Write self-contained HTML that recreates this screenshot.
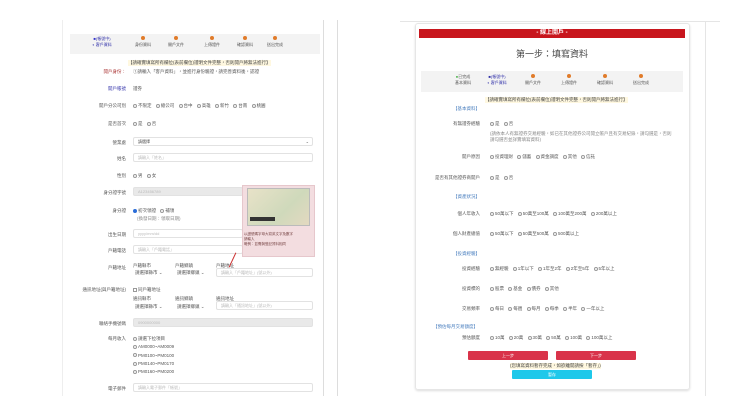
<!DOCTYPE html><html><head><meta charset="utf-8"><style>
*{margin:0;padding:0;box-sizing:border-box}
body{width:740px;height:416px;background:#fff;position:relative;overflow:hidden;font-family:"Liberation Sans","Noto Sans CJK TC",sans-serif;font-size:4.5px;color:#555}
.a{position:absolute;white-space:nowrap}
.in{position:absolute;border:1px solid #e2e2e2;background:#fff;height:9px;border-radius:2px;color:#bbb;padding-left:4px;line-height:7px;font-size:4px}
.g{background:#e9e9e9}
.r{display:inline-block;width:4px;height:4px;border:1px solid #999;border-radius:50%;margin:0 1px 0 3px;vertical-align:middle}
.lab{position:absolute;text-align:right;width:60px;white-space:nowrap}
.dot{display:inline-block;width:4px;height:4px;border-radius:50%;background:#e07b2a}
.step{position:absolute;text-align:center;width:30px;line-height:6px;font-size:4px}
.btn{position:absolute;height:9px;color:#fff;text-align:center;line-height:9px;font-size:4px;border-radius:1px}
</style></head><body>
<!-- left -->
<div class="a" style="left:62px;top:20px;width:262px;height:376px;border-left:1px solid #eee;border-right:1px solid #ddd"></div>
<div class="a" style="left:337px;top:20px;width:1px;height:376px;background:#ddd"></div>
<div class="a" style="left:70px;top:34px;width:250px;height:20px;background:#f3f3f3"></div>
<div class="step" style="left:87px;top:36px;color:#33a"><span style="color:#33c">■</span>(帳號中)<br>◐ 客戶資料</div>
<div class="step" style="left:128px;top:36px"><span class="dot"></span><br>身份資料</div>
<div class="step" style="left:161px;top:36px"><span class="dot"></span><br>開戶文件</div>
<div class="step" style="left:197px;top:36px"><span class="dot"></span><br>上傳證件</div>
<div class="step" style="left:230px;top:36px"><span class="dot"></span><br>確認資料</div>
<div class="step" style="left:260px;top:36px"><span class="dot"></span><br>送出完成</div>
<div class="a" style="left:128px;top:60px;color:#444;background:#fff8e0">【請確實填寫所有欄位(表前欄位)證明文件完整，否則開戶將無法進行】</div>
<div class="lab" style="left:66px;top:69px;color:#a33">開戶身份：</div><div class="a" style="left:133px;top:69px">①請輸入「客戶資料」，並進行身份驗證，請完善資料後，認證</div>
<div class="lab" style="left:66px;top:86px;color:#33a">開戶帳號</div><div class="a" style="left:133px;top:86px">證券</div>
<div class="lab" style="left:66px;top:103px">開戶分公司別</div><div class="a" style="left:130px;top:103px"><span class="r"></span>不限定 <span class="r"></span>總公司 <span class="r"></span>台中 <span class="r"></span>高雄 <span class="r"></span>新竹 <span class="r"></span>台南 <span class="r"></span>桃園</div>
<div class="lab" style="left:66px;top:121px">是否首次</div><div class="a" style="left:130px;top:121px"><span class="r"></span>是 <span class="r"></span>否</div>
<div class="lab" style="left:66px;top:140px">營業處</div><div class="in" style="left:133px;top:137px;width:180px;color:#555">請選擇<span style="float:right;padding-right:3px">⌄</span></div>
<div class="lab" style="left:66px;top:156px">姓名</div><div class="in" style="left:133px;top:153px;width:180px">請輸入「姓名」</div>
<div class="lab" style="left:66px;top:173px">性別</div><div class="a" style="left:130px;top:173px"><span class="r"></span>男 <span class="r"></span>女</div>
<div class="lab" style="left:66px;top:190px">身分證字號</div><div class="in g" style="left:133px;top:187px;width:110px">A123456789</div>
<div class="lab" style="left:66px;top:208px">身分證</div><div class="a" style="left:130px;top:208px"><span class="r" style="background:#2a6dd8;border-color:#2a6dd8"></span>初次領證 <span class="r"></span>補領</div>
<div class="a" style="left:137px;top:216px;color:#888">(換發日期：領取日期)</div>
<div class="lab" style="left:66px;top:232px">出生日期</div><div class="in" style="left:133px;top:229px;width:110px">yyyy/mm/dd</div>
<div class="lab" style="left:66px;top:248px">戶籍電話</div><div class="in" style="left:133px;top:245px;width:110px">請輸入「戶籍電話」</div>
<div class="lab" style="left:66px;top:265px">戶籍地址</div>
<div class="a" style="left:133px;top:263px">戶籍縣市</div><div class="a" style="left:175px;top:263px">戶籍鄉鎮</div><div class="a" style="left:216px;top:263px">戶籍地址</div>
<div class="a" style="left:135px;top:270px;width:40px;color:#555">請選擇縣市 ⌄</div><div class="a" style="left:177px;top:270px">請選擇鄉鎮 ⌄</div>
<div class="in" style="left:216px;top:268px;width:97px">請輸入「戶籍地址」(號以外)</div>
<div class="lab" style="left:66px;top:287px">通訊地址(與戶籍地址)</div><div class="a" style="left:130px;top:287px"><span class="r" style="border-radius:0"></span>同戶籍地址</div>
<div class="a" style="left:133px;top:296px">通訊縣市</div><div class="a" style="left:175px;top:296px">通訊鄉鎮</div><div class="a" style="left:216px;top:296px">通訊地址</div>
<div class="a" style="left:135px;top:304px">請選擇縣市 ⌄</div><div class="a" style="left:177px;top:304px">請選擇鄉鎮 ⌄</div>
<div class="in" style="left:216px;top:301px;width:97px">請輸入「通訊地址」(號以外)</div>
<div class="lab" style="left:66px;top:321px">聯絡手機號碼</div><div class="in g" style="left:133px;top:318px;width:180px">0900000000</div>
<div class="lab" style="left:66px;top:336px">每月收入</div>
<div class="a" style="left:130px;top:335px;line-height:8.3px"><span class="r"></span>請選下拉項目<br><span class="r"></span>AM0000~AM0009<br><span class="r"></span>PM0100~PM0100<br><span class="r"></span>PM0140~PM0170<br><span class="r"></span>PM0160~PM0200</div>
<div class="lab" style="left:66px;top:386px">電子郵件</div><div class="in" style="left:133px;top:383px;width:180px">請輸入電子郵件「帳號」</div>
<div class="a" style="left:242px;top:185px;width:73px;height:72px;background:#f3dde0;border:1px solid #e6c7cc"></div>
<div class="a" style="left:247px;top:188px;width:63px;height:38px;background:linear-gradient(135deg,#e8e2c8,#cfd9bb 60%,#e3d9c0);border:1px solid #bbb"></div>
<div class="a" style="left:250px;top:217px;width:25px;height:4px;background:#333"></div>
<div class="a" style="left:244px;top:232px;font-size:3.5px;line-height:5px;color:#744">以證號碼字母大寫英文字及數字<br>請輸入<br>範例：並需與登記資料相同</div>
<div class="a" style="left:232px;top:252px;width:1px;height:16px;background:#c33;transform:rotate(25deg)"></div>
<!-- right -->
<div class="a" style="left:400px;top:21px;width:320px;height:1px;background:#e5e5e5"></div>
<div class="a" style="left:705px;top:21px;width:1px;height:375px;background:#e5e5e5"></div>
<div class="a" style="left:415px;top:23px;width:275px;height:367px;border:1px solid #e6e6e6;border-radius:3px;box-shadow:0 1px 2px #ddd"></div>
<div class="a" style="left:419px;top:29px;width:266px;height:9px;background:#c8161d;color:#fff;text-align:center;font-size:6px;line-height:9px;font-weight:bold">- 線上開戶 -</div>
<div class="a" style="left:419px;top:47px;width:266px;text-align:center;font-size:9px;color:#444">第一步：填寫資料</div>
<div class="a" style="left:421px;top:71px;width:262px;height:21px;background:#f3f3f3"></div>
<div class="step" style="left:448px;top:74px"><span style="color:#3a3">●</span>已完成<br>基本資料</div>
<div class="step" style="left:482px;top:74px;color:#33a">■(帳號中)<br>◐ 客戶資料</div>
<div class="step" style="left:518px;top:74px"><span class="dot"></span><br>開戶文件</div>
<div class="step" style="left:554px;top:74px"><span class="dot"></span><br>上傳證件</div>
<div class="step" style="left:590px;top:74px"><span class="dot"></span><br>確認資料</div>
<div class="step" style="left:626px;top:74px"><span class="dot"></span><br>送出完成</div>
<div class="a" style="left:485px;top:97px;background:#fff8e0;color:#444">【請確實填寫所有欄位(表前欄位)證明文件完整，否則開戶將無法進行】</div>
<div class="a" style="left:453px;top:106px;color:#4a7fbf">【基本資料】</div>
<div class="lab" style="left:420px;top:121px">有無證券經驗</div><div class="a" style="left:487px;top:121px"><span class="r"></span>是 <span class="r"></span>否</div>
<div class="a" style="left:490px;top:131px;color:#888;line-height:6px">(請依本人有無證券交易經驗，如已在其他證券公司開立帳戶且有交易紀錄，請勾選是，否則<br>請勾選否並詳實填寫資料)</div>
<div class="lab" style="left:420px;top:154px">開戶原因</div><div class="a" style="left:487px;top:154px"><span class="r"></span>投資理財 <span class="r"></span>儲蓄 <span class="r"></span>資金調度 <span class="r"></span>其他 <span class="r"></span>信託</div>
<div class="lab" style="left:420px;top:175px">是否有其他證券商開戶</div><div class="a" style="left:487px;top:175px"><span class="r"></span>是 <span class="r"></span>否</div>
<div class="a" style="left:453px;top:194px;color:#4a7fbf">【資產狀況】</div>
<div class="lab" style="left:420px;top:211px">個人年收入</div><div class="a" style="left:487px;top:211px"><span class="r"></span>50萬以下 <span class="r"></span>50萬至100萬 <span class="r"></span>100萬至200萬 <span class="r"></span>200萬以上</div>
<div class="lab" style="left:420px;top:231px">個人財產總值</div><div class="a" style="left:487px;top:231px"><span class="r"></span>50萬以下 <span class="r"></span>50萬至500萬 <span class="r"></span>500萬以上</div>
<div class="a" style="left:453px;top:251px;color:#4a7fbf">【投資經驗】</div>
<div class="lab" style="left:420px;top:266px">投資經驗</div><div class="a" style="left:487px;top:266px"><span class="r"></span>無經驗 <span class="r"></span>1年以下 <span class="r"></span>1年至2年 <span class="r"></span>2年至5年 <span class="r"></span>5年以上</div>
<div class="lab" style="left:420px;top:286px">投資標的</div><div class="a" style="left:487px;top:286px"><span class="r"></span>股票 <span class="r"></span>基金 <span class="r"></span>債券 <span class="r"></span>其他</div>
<div class="lab" style="left:420px;top:306px">交易頻率</div><div class="a" style="left:487px;top:306px"><span class="r"></span>每日 <span class="r"></span>每週 <span class="r"></span>每月 <span class="r"></span>每季 <span class="r"></span>半年 <span class="r"></span>一年以上</div>
<div class="a" style="left:433px;top:324px;color:#4a7fbf">【預估每月交易額度】</div>
<div class="lab" style="left:420px;top:335px">預估額度</div><div class="a" style="left:487px;top:335px"><span class="r"></span>10萬 <span class="r"></span>20萬 <span class="r"></span>30萬 <span class="r"></span>50萬 <span class="r"></span>100萬 <span class="r"></span>100萬以上</div>
<div class="btn" style="left:468px;top:351px;width:80px;background:#d9334a">上一步</div>
<div class="btn" style="left:556px;top:351px;width:80px;background:#d9334a">下一步</div>
<div class="a" style="left:510px;top:363px;background:#fff8e0;color:#444">(您填寫資料暫存完成，如欲離開請按「暫存」)</div>
<div class="btn" style="left:512px;top:370px;width:80px;background:#1ec8ea">暫存</div>
</body></html>
